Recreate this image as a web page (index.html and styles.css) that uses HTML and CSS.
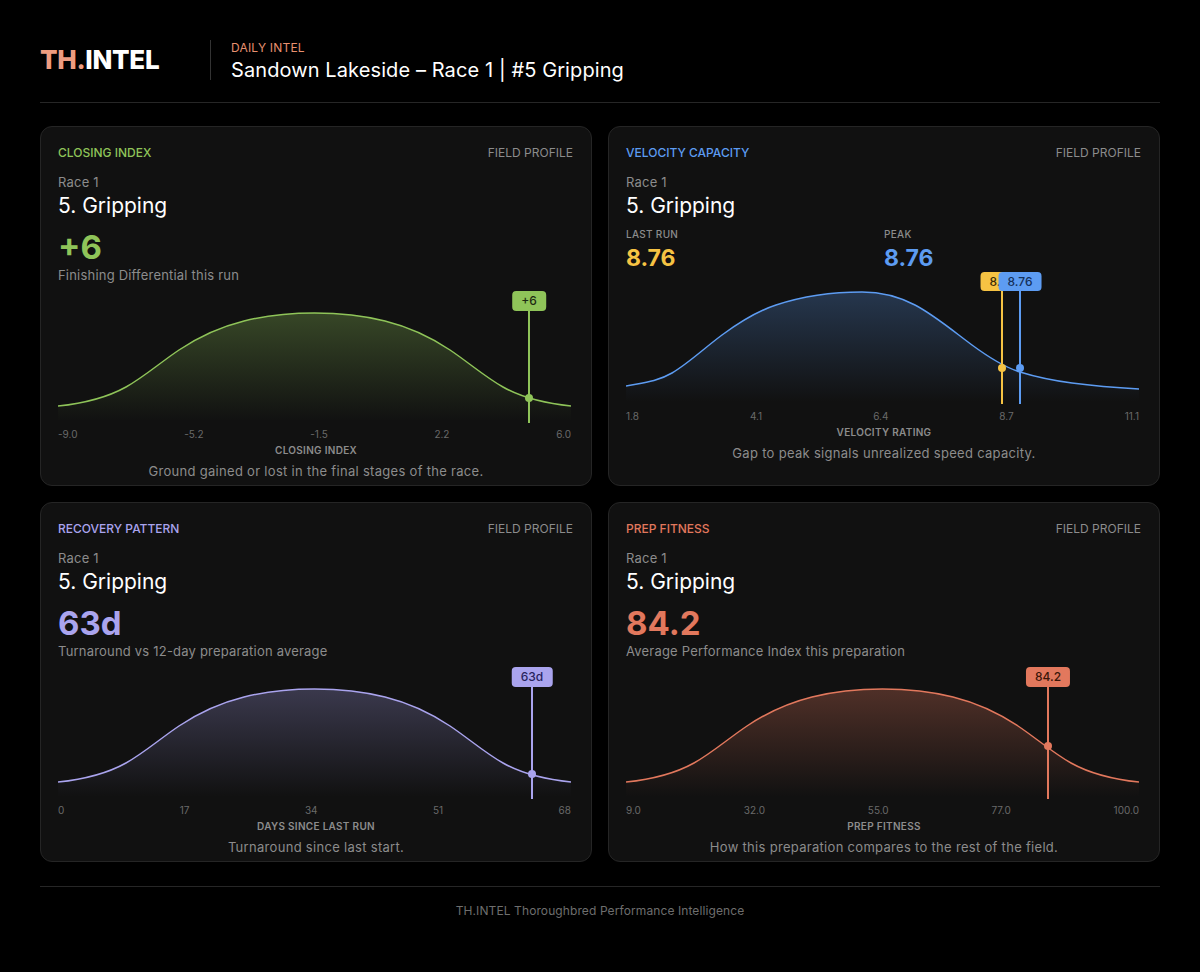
FILE: index.html
```html
<!DOCTYPE html>
<html lang="en">
<head>
<meta charset="utf-8">
<title>TH.INTEL – Daily Intel</title>
<link rel="stylesheet" href="styles.css">
</head>
<body>
<div class="page">
  <header class="top">
    <div class="logo"><span class="logo-th">TH.</span>INTEL</div>
    <div class="headline">
      <div class="kicker">DAILY INTEL</div>
      <h1 class="title">Sandown Lakeside – Race 1 | #5 Gripping</h1>
    </div>
  </header>

  <main class="grid">
    <!-- Closing index -->
    <section class="card green">
      <div class="card-head"><span class="card-title">CLOSING INDEX</span><span class="card-tag">FIELD PROFILE</span></div>
      <div class="race">Race 1</div>
      <div class="runner">5. Gripping</div>
      <div class="big">+6</div>
      <div class="sub">Finishing Differential this run</div>
      <div class="chart">
        <span class="pill" style="left:471px">+6</span>
        <svg class="plot" width="513" height="132" viewBox="0 0 513 132">
          <defs>
            <linearGradient id="fillGreen" x1="0" y1="0" x2="0" y2="1">
              <stop offset="0" stop-color="#8fc459" stop-opacity="0.3"/>
              <stop offset="1" stop-color="#8fc459" stop-opacity="0"/>
            </linearGradient>
          </defs>
          <path d="M0,115 C22.7,112.7 45.3,108.6 68,96 C85.7,86.2 103.3,70.8 121,59 C142.7,44.5 164.3,35.4 186,30 C209.5,24.1 233,22 256.5,22 C280,22 303.5,24.1 327,30 C348.7,35.4 370.3,44.5 392,59 C409.7,70.8 427.3,86.2 445,96 C467.7,108.6 490.3,112.7 513,115 L513,130 L0,130 Z" fill="url(#fillGreen)"/>
          <path d="M0,115 C22.7,112.7 45.3,108.6 68,96 C85.7,86.2 103.3,70.8 121,59 C142.7,44.5 164.3,35.4 186,30 C209.5,24.1 233,22 256.5,22 C280,22 303.5,24.1 327,30 C348.7,35.4 370.3,44.5 392,59 C409.7,70.8 427.3,86.2 445,96 C467.7,108.6 490.3,112.7 513,115" fill="none" stroke="#8fc459" stroke-width="1.5"/>
          <line x1="471" y1="20" x2="471" y2="132" stroke="#8fc459" stroke-width="2"/>
          <circle cx="471" cy="107" r="4" fill="#8fc459"/>
        </svg>
      </div>
      <div class="ticks"><span>-9.0</span><span>-5.2</span><span>-1.5</span><span>2.2</span><span>6.0</span></div>
      <div class="axis-title">CLOSING INDEX</div>
      <p class="desc">Ground gained or lost in the final stages of the race.</p>
    </section>

    <!-- Velocity capacity -->
    <section class="card blue">
      <div class="card-head"><span class="card-title">VELOCITY CAPACITY</span><span class="card-tag">FIELD PROFILE</span></div>
      <div class="race">Race 1</div>
      <div class="runner">5. Gripping</div>
      <div class="metrics">
        <div class="metric">
          <div class="metric-label">LAST RUN</div>
          <div class="metric-value yellow-text">8.76</div>
        </div>
        <div class="metric">
          <div class="metric-label">PEAK</div>
          <div class="metric-value blue-text">8.76</div>
        </div>
      </div>
      <div class="chart chart-tight">
        <span class="pill pill-yellow" style="left:376px">8.76</span>
        <span class="pill" style="left:394px">8.76</span>
        <svg class="plot" width="513" height="132" viewBox="0 0 513 132">
          <defs>
            <linearGradient id="fillBlue" x1="0" y1="0" x2="0" y2="1">
              <stop offset="0" stop-color="#5d9cf2" stop-opacity="0.27"/>
              <stop offset="1" stop-color="#5d9cf2" stop-opacity="0"/>
            </linearGradient>
          </defs>
          <path d="M0,114 C15.3,110.9 30.7,110 46,101 C62.7,91.2 79.3,75.3 96,63 C114,49.7 132,38.9 150,33 C178.7,23.5 207.3,20 236,20 C253.7,20 271.3,23.8 289,33 C308,42.9 327,58.9 346,73 C362,84.8 378,95 394,100 C411.3,105.4 428.7,108.7 446,111 C468.3,113.9 490.7,115.7 513,117 L513,130 L0,130 Z" fill="url(#fillBlue)"/>
          <path d="M0,114 C15.3,110.9 30.7,110 46,101 C62.7,91.2 79.3,75.3 96,63 C114,49.7 132,38.9 150,33 C178.7,23.5 207.3,20 236,20 C253.7,20 271.3,23.8 289,33 C308,42.9 327,58.9 346,73 C362,84.8 378,95 394,100 C411.3,105.4 428.7,108.7 446,111 C468.3,113.9 490.7,115.7 513,117" fill="none" stroke="#5d9cf2" stroke-width="1.5"/>
          <line x1="376" y1="19" x2="376" y2="132" stroke="#f6c343" stroke-width="2"/>
          <line x1="394" y1="19" x2="394" y2="132" stroke="#5d9cf2" stroke-width="2"/>
          <circle cx="376" cy="96" r="4" fill="#f6c343"/>
          <circle cx="394" cy="96" r="4" fill="#5d9cf2"/>
        </svg>
      </div>
      <div class="ticks ticks-tight"><span>1.8</span><span>4.1</span><span>6.4</span><span>8.7</span><span>11.1</span></div>
      <div class="axis-title">VELOCITY RATING</div>
      <p class="desc">Gap to peak signals unrealized speed capacity.</p>
    </section>

    <!-- Recovery pattern -->
    <section class="card purple">
      <div class="card-head"><span class="card-title">RECOVERY PATTERN</span><span class="card-tag">FIELD PROFILE</span></div>
      <div class="race">Race 1</div>
      <div class="runner">5. Gripping</div>
      <div class="big">63d</div>
      <div class="sub">Turnaround vs 12-day preparation average</div>
      <div class="chart">
        <span class="pill" style="left:474px">63d</span>
        <svg class="plot" width="513" height="132" viewBox="0 0 513 132">
          <defs>
            <linearGradient id="fillPurple" x1="0" y1="0" x2="0" y2="1">
              <stop offset="0" stop-color="#aaa4ee" stop-opacity="0.27"/>
              <stop offset="1" stop-color="#aaa4ee" stop-opacity="0"/>
            </linearGradient>
          </defs>
          <path d="M0,115 C22.7,112.7 45.3,108.6 68,96 C85.7,86.2 103.3,70.8 121,59 C142.7,44.5 164.3,35.4 186,30 C209.5,24.1 233,22 256.5,22 C280,22 303.5,24.1 327,30 C348.7,35.4 370.3,44.5 392,59 C409.7,70.8 427.3,86.2 445,96 C467.7,108.6 490.3,112.7 513,115 L513,130 L0,130 Z" fill="url(#fillPurple)"/>
          <path d="M0,115 C22.7,112.7 45.3,108.6 68,96 C85.7,86.2 103.3,70.8 121,59 C142.7,44.5 164.3,35.4 186,30 C209.5,24.1 233,22 256.5,22 C280,22 303.5,24.1 327,30 C348.7,35.4 370.3,44.5 392,59 C409.7,70.8 427.3,86.2 445,96 C467.7,108.6 490.3,112.7 513,115" fill="none" stroke="#aaa4ee" stroke-width="1.5"/>
          <line x1="474" y1="20" x2="474" y2="132" stroke="#aaa4ee" stroke-width="2"/>
          <circle cx="474" cy="107" r="4" fill="#aaa4ee"/>
        </svg>
      </div>
      <div class="ticks"><span>0</span><span>17</span><span>34</span><span>51</span><span>68</span></div>
      <div class="axis-title">DAYS SINCE LAST RUN</div>
      <p class="desc">Turnaround since last start.</p>
    </section>

    <!-- Prep fitness -->
    <section class="card orange">
      <div class="card-head"><span class="card-title">PREP FITNESS</span><span class="card-tag">FIELD PROFILE</span></div>
      <div class="race">Race 1</div>
      <div class="runner">5. Gripping</div>
      <div class="big">84.2</div>
      <div class="sub">Average Performance Index this preparation</div>
      <div class="chart">
        <span class="pill" style="left:422px">84.2</span>
        <svg class="plot" width="513" height="132" viewBox="0 0 513 132">
          <defs>
            <linearGradient id="fillOrange" x1="0" y1="0" x2="0" y2="1">
              <stop offset="0" stop-color="#e2785d" stop-opacity="0.3"/>
              <stop offset="1" stop-color="#e2785d" stop-opacity="0"/>
            </linearGradient>
          </defs>
          <path d="M0,115 C22.7,112.7 45.3,108.6 68,96 C85.7,86.2 103.3,70.8 121,59 C142.7,44.5 164.3,35.4 186,30 C209.5,24.1 233,22 256.5,22 C280,22 303.5,24.1 327,30 C348.7,35.4 370.3,44.5 392,59 C409.7,70.8 427.3,86.2 445,96 C467.7,108.6 490.3,112.7 513,115 L513,130 L0,130 Z" fill="url(#fillOrange)"/>
          <path d="M0,115 C22.7,112.7 45.3,108.6 68,96 C85.7,86.2 103.3,70.8 121,59 C142.7,44.5 164.3,35.4 186,30 C209.5,24.1 233,22 256.5,22 C280,22 303.5,24.1 327,30 C348.7,35.4 370.3,44.5 392,59 C409.7,70.8 427.3,86.2 445,96 C467.7,108.6 490.3,112.7 513,115" fill="none" stroke="#e2785d" stroke-width="1.5"/>
          <line x1="422" y1="20" x2="422" y2="132" stroke="#e2785d" stroke-width="2"/>
          <circle cx="422" cy="79" r="4" fill="#e2785d"/>
        </svg>
      </div>
      <div class="ticks"><span>9.0</span><span>32.0</span><span>55.0</span><span>77.0</span><span>100.0</span></div>
      <div class="axis-title">PREP FITNESS</div>
      <p class="desc">How this preparation compares to the rest of the field.</p>
    </section>
  </main>

  <footer class="foot">TH.INTEL Thoroughbred Performance Intelligence</footer>
</div>
</body>
</html>
```

FILE: styles.css
```css
* { box-sizing: border-box; }

html, body {
  margin: 0;
  background: #000;
}

body {
  font-family: Inter, "Noto Sans", "DejaVu Sans", sans-serif;
  color: #fff;
}

.page {
  padding: 40px 40px 0;
}

/* Header */
.top {
  display: flex;
  align-items: center;
  padding-bottom: 22px;
  border-bottom: 1px solid #262626;
}

.logo {
  width: 170px;
  font-size: 26px;
  font-weight: 800;
  letter-spacing: -0.3px;
  line-height: 40px;
  color: #fff;
}

.logo-th {
  color: #ee9c80;
}

.headline {
  height: 40px;
  padding-left: 20px;
  border-left: 1px solid #333;
  display: flex;
  flex-direction: column;
}

.kicker {
  font-size: 12px;
  line-height: 16px;
  color: #e8906f;
  letter-spacing: 0.2px;
}

.title {
  margin: 0;
  font-size: 20px;
  line-height: 28px;
  font-weight: 400;
  letter-spacing: 0.1px;
  color: #fff;
}

/* Grid */
.grid {
  margin-top: 23px;
  display: grid;
  grid-template-columns: 1fr 1fr;
  grid-auto-rows: 360px;
  gap: 16px;
}

.card {
  background: #111111;
  border: 1px solid #252525;
  border-radius: 12px;
  padding: 17px 17px 0;
}

.card-head {
  display: flex;
  justify-content: space-between;
  font-size: 12px;
  line-height: 16px;
  margin-top: 1px;
}

.card-title {
  font-weight: 500;
}

.card-tag {
  color: #8c8c8c;
  margin-right: 1px;
}

.green .card-title, .green .big { color: #8fc459; }
.blue .card-title { color: #5d9cf2; }
.purple .card-title, .purple .big { color: #aaa4ee; }
.orange .card-title, .orange .big { color: #e2785d; }

.race {
  margin-top: 12px;
  font-size: 13px;
  line-height: 18px;
  letter-spacing: 0.2px;
  color: #8c8c8c;
}

.runner {
  margin-top: 1px;
  font-size: 21px;
  line-height: 28px;
  color: #fff;
}

.big {
  margin-top: 8px;
  font-size: 33px;
  line-height: 38px;
  font-weight: 700;
}

.sub {
  font-size: 13px;
  line-height: 18px;
  letter-spacing: 0.2px;
  color: #8c8c8c;
}

/* Velocity metrics */
.metrics {
  margin-top: 7px;
  display: grid;
  grid-template-columns: 1fr 1fr;
}

.metric-label {
  font-size: 10px;
  line-height: 14px;
  color: #8c8c8c;
  font-weight: 500;
  letter-spacing: 0.3px;
}

.metric-value {
  margin-top: 3px;
  font-size: 23px;
  line-height: 28px;
  font-weight: 700;
}

.yellow-text { color: #f6c343; }
.blue-text { color: #5d9cf2; }

/* Chart */
.chart {
  position: relative;
  margin-top: 7px;
  width: 513px;
  height: 132px;
}

.chart-tight {
  margin-top: 0;
}

.plot {
  display: block;
}

.pill {
  position: absolute;
  top: 0;
  transform: translateX(-50%);
  height: 20px;
  padding: 0 9px;
  border-radius: 4px;
  font-size: 12px;
  line-height: 20px;
  font-weight: 500;
  white-space: nowrap;
}

.green .pill { background: #8fc459; color: #1d2a12; }
.blue .pill { background: #5d9cf2; color: #14305a; height: 19px; line-height: 19px; }
.blue .pill-yellow { background: #f6c343; color: #3a2c06; }
.purple .pill { background: #aaa4ee; color: #28245e; }
.orange .pill { background: #e2785d; color: #3a1609; }

.ticks {
  margin-top: 4px;
  width: 513px;
  display: flex;
  justify-content: space-between;
  font-size: 10px;
  line-height: 14px;
  color: #6a6a6a;
}

.ticks-tight {
  margin-top: 5px;
}

.axis-title {
  margin-top: 2px;
  text-align: center;
  font-size: 10px;
  line-height: 14px;
  font-weight: 600;
  color: #8c8c8c;
  letter-spacing: 0.3px;
}

.desc {
  margin: 5px 0 0;
  text-align: center;
  font-size: 13px;
  line-height: 18px;
  letter-spacing: 0.3px;
  color: #8c8c8c;
}

/* Footer */
.foot {
  margin-top: 24px;
  border-top: 1px solid #262626;
  padding-top: 16px;
  text-align: center;
  font-size: 12px;
  line-height: 16px;
  letter-spacing: 0.1px;
  color: #6e6e6e;
}
```
